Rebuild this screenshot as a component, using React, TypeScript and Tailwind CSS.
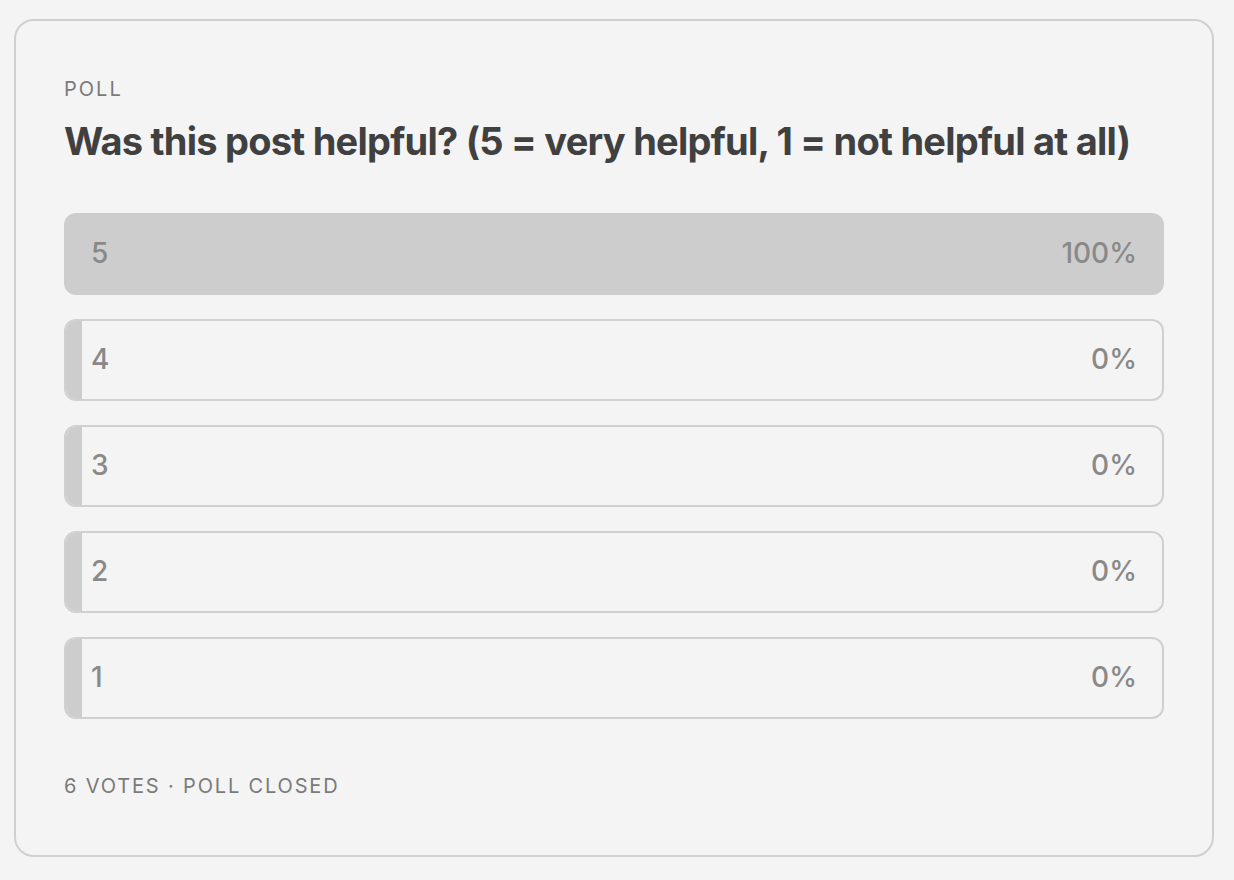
const options = [
  { label: "5", pct: 100 },
  { label: "4", pct: 0 },
  { label: "3", pct: 0 },
  { label: "2", pct: 0 },
  { label: "1", pct: 0 },
];

function PollOption({ label, pct }: { label: string; pct: number }) {
  const full = pct >= 100;
  return (
    <div
      className={`relative flex h-[82px] items-center justify-between overflow-hidden rounded-[12px] ${
        full ? "bg-[#cdcdcd] px-[27px]" : "border-2 border-[#d0d0d0] px-[25px]"
      }`}
    >
      {!full && (
        <div
          className="absolute inset-y-0 left-0 bg-[#cdcdcd]"
          style={{ width: `max(16px, ${pct}%)` }}
        />
      )}
      <span className="relative pb-[2px] text-[28px] font-medium text-[#898989]">{label}</span>
      <span className="relative pb-[2px] text-[28px] font-medium text-[#898989]">{pct}%</span>
    </div>
  );
}

export default function App() {
  return (
    <div className="min-h-[880px] bg-[#f4f4f4] px-[14px] pt-[19px] font-['Inter',sans-serif]">
      <div className="w-[1200px] rounded-[20px] border-2 border-[#d0d0d0] px-[48px] pb-[54px] pt-[53px]">
        <div className="text-[20px] leading-[30px] tracking-[0.1em] text-[#7a7a7a]">POLL</div>
        <h1 className="mt-[14px] text-[38px] font-bold leading-[46px] tracking-[-0.02em] text-[#404040]">
          Was this post helpful? (5 = very helpful, 1 = not helpful at all)
        </h1>
        <div className="mt-[49px] flex flex-col gap-[24px]">
          {options.map((o) => (
            <PollOption key={o.label} label={o.label} pct={o.pct} />
          ))}
        </div>
        <div className="mt-[52px] text-[20px] leading-[30px] tracking-[0.092em] text-[#7a7a7a]">
          6 VOTES · POLL CLOSED
        </div>
      </div>
    </div>
  );
}
